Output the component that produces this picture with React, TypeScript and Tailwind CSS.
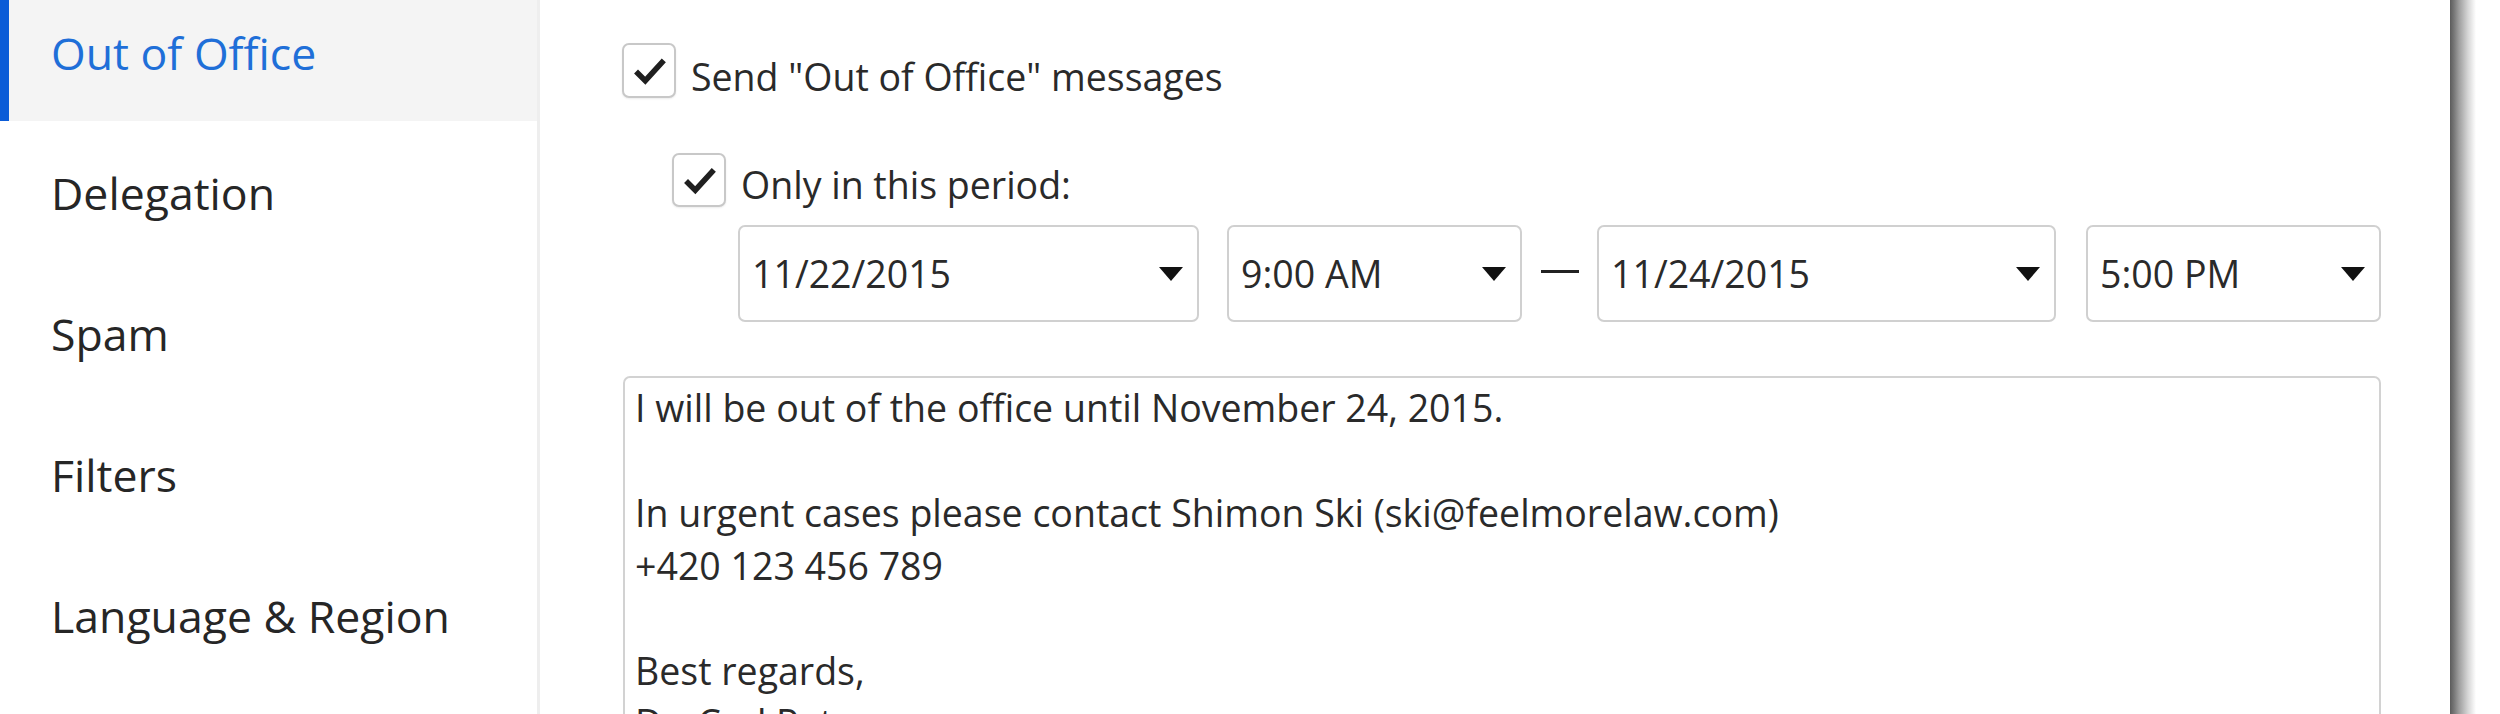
const navItems = ["Delegation", "Spam", "Filters", "Language & Region"];

function Check() {
  return (
    <svg viewBox="0 0 54 54" className="w-full h-full">
      <path d="M13 28 L23 38 L43 16" fill="none" stroke="#1f1f1f" strokeWidth="6" strokeLinejoin="miter" />
    </svg>
  );
}

function Checkbox({ size }: { size: string }) {
  return (
    <div className={`${size} shrink-0 rounded-[7px] border-2 border-[#c8c8c8] bg-white shadow-[0_1px_2px_rgba(0,0,0,0.08)]`}>
      <Check />
    </div>
  );
}

function Arrow() {
  return (
    <svg viewBox="0 0 24 14" className="w-[24px] h-[14px] shrink-0">
      <path d="M0 0 H24 L12 14 Z" fill="#111" />
    </svg>
  );
}

function Dropdown({ value, width }: { value: string; width: string }) {
  return (
    <div className={`${width} h-[97px] shrink-0 flex items-center justify-between rounded-[7px] border-2 border-[#d0d0d0] bg-white pl-[12px] pr-[14px]`}>
      <span className="leading-[51px]">{value}</span>
      <Arrow />
    </div>
  );
}

const message = [
  "I will be out of the office until November 24, 2015.",
  "",
  "In urgent cases please contact Shimon Ski (ski@feelmorelaw.com)",
  "+420 123 456 789",
  "",
  "Best regards,",
  "Dr. Carl Petersen",
];

export default function App() {
  return (
    <div className="w-[2500px] h-[714px] overflow-hidden bg-white flex font-['Open_Sans',sans-serif] text-[#262626]">
      <aside className="w-[540px] shrink-0 border-r-[3px] border-[#eeeeee] flex flex-col text-[44.6px] leading-[61px]">
        <div className="relative h-[121px] bg-[#f4f4f4] pl-[51px] pt-[22px] text-[#1f6fd8]">
          <div className="absolute left-0 top-0 bottom-0 w-[9px] bg-[#0b5cd7]" />
          Out of Office
        </div>
        {navItems.map((item) => (
          <div key={item} className="h-[141px] pl-[51px] pt-[41px]">
            {item}
          </div>
        ))}
      </aside>

      <main className="w-[1910px] shrink-0 pl-[82px] pr-[69px] pt-[43px] text-[37.5px] text-[#2a2a2a]">
        <div className="flex items-start h-[59px]">
          <Checkbox size="w-[54px] h-[55px]" />
          <span className="ml-[15px] mt-[8px] leading-[51px]">Send "Out of Office" messages</span>
        </div>

        <div className="flex items-start h-[54px] ml-[50px] mt-[51px]">
          <Checkbox size="w-[54px] h-[54px]" />
          <span className="ml-[15px] mt-[6px] leading-[51px]">Only in this period:</span>
        </div>

        <div className="flex items-center ml-[116px] mt-[18px]">
          <Dropdown value="11/22/2015" width="w-[461px]" />
          <div className="w-[28px]" />
          <Dropdown value="9:00 AM" width="w-[295px]" />
          <div className="w-[75px] flex justify-center">
            <div className="w-[38px] h-[3px] bg-[#222] -translate-y-[2px]" />
          </div>
          <Dropdown value="11/24/2015" width="w-[459px]" />
          <div className="w-[30px]" />
          <Dropdown value="5:00 PM" width="w-[295px]" />
        </div>

        <div className="mt-[54px] ml-[1px] h-[420px] rounded-[7px] border-2 border-[#d2d2d2] bg-white pl-[10px] pt-[4px] leading-[52.5px]">
          {message.map((line, i) => (
            <div key={i} className="h-[52.5px] whitespace-pre">
              {line}
            </div>
          ))}
        </div>
      </main>

      <div className="w-[50px] shrink-0 flex">
        <div className="w-[26px] h-full bg-[linear-gradient(to_right,#5c5c5c_0px,#777_4px,#9e9e9e_9px,#d6d6d6_18px,#ffffff_26px)]" />
      </div>
    </div>
  );
}
